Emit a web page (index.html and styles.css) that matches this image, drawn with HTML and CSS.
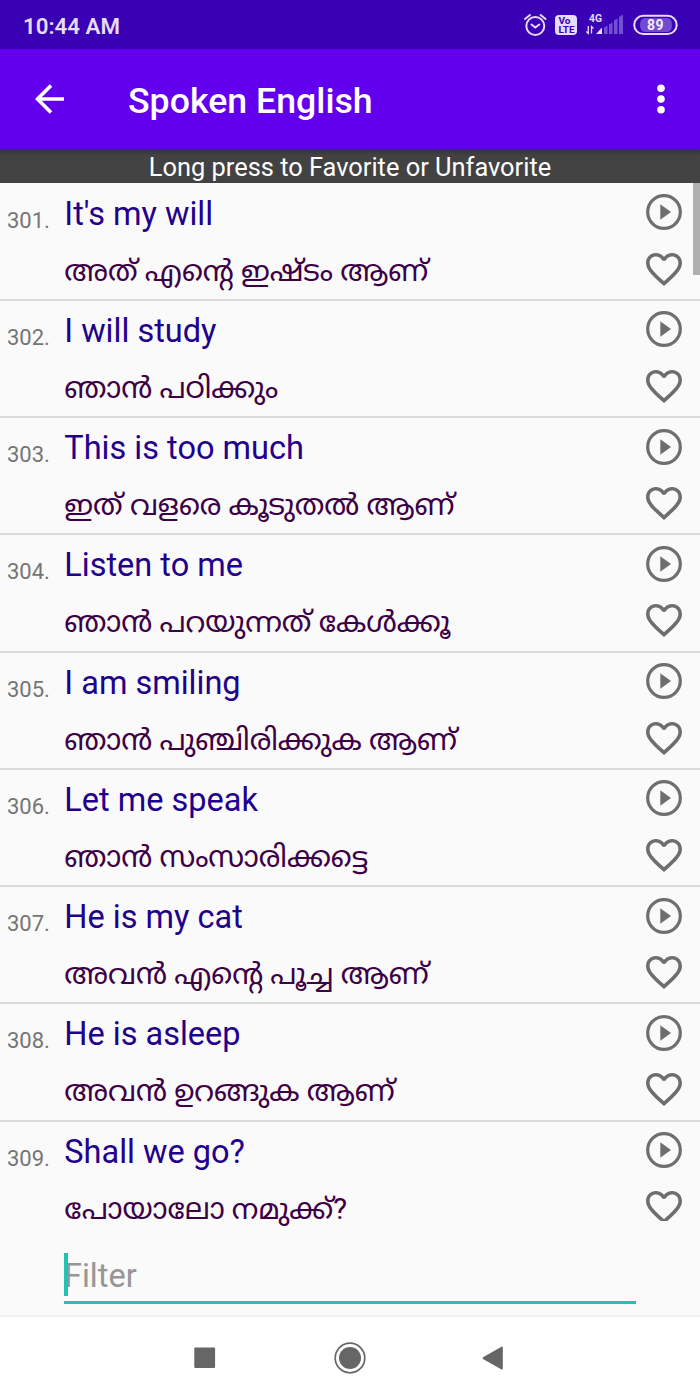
FILE: index.html
```html
<!DOCTYPE html>
<html lang="en">
	<head>
		<meta charset="utf-8">
		<title>Spoken English</title>
		<link rel="stylesheet" href="styles.css">
	</head>
	<body>
		<svg class="defs">
			<symbol id="play" viewBox="0 0 36 36">
				<circle cx="18" cy="18" r="16.3" fill="none" stroke="#6e6e6e" stroke-width="3.2"/>
				<path d="M14.3 10.3v15.4L25 18z" fill="#6e6e6e"/>
			</symbol>
			<symbol id="heart" viewBox="2 3 20 18.35">
				<path fill="#6e6e6e" d="M16.5 3c-1.74 0-3.41.81-4.5 2.09C10.91 3.81 9.24 3 7.5 3 4.42 3 2 5.42 2 8.5c0 3.78 3.4 6.86 8.55 11.54L12 21.35l1.45-1.32C18.6 15.36 22 12.28 22 8.5 22 5.42 19.58 3 16.5 3zm-4.4 15.55l-.1.1-.1-.1C7.14 14.24 4 11.39 4 8.5 4 6.5 5.5 5 7.5 5c1.54 0 3.04.99 3.57 2.36h1.87C13.46 5.99 14.96 5 16.5 5c2 0 3.5 1.5 3.5 3.5 0 2.89-3.14 5.74-7.9 10.05z"/>
			</symbol>
		</svg>
		<div id="status">
			<span class="time">10:44 AM</span>
			<svg class="icons" width="160" height="30" viewBox="520 10 160 30">
				<g fill="none" stroke="#e6dcfa" stroke-width="2" stroke-linecap="round">
					<circle cx="535.3" cy="26" r="9"/>
					<path d="M531.5 24.5l3.800 3 4-3"/>
					<path d="M525 19l5-4M545.600 19l-5-4"/>
				</g>
				<rect x="555" y="15" width="22" height="20" rx="4" fill="#e6dcfa"/>
				<text x="558.500" y="24" class="volte" textLength="12" lengthAdjust="spacingAndGlyphs">Vo</text>
				<text x="558.500" y="32.500" class="volte" textLength="16" lengthAdjust="spacingAndGlyphs">LTE</text>
				<text x="589" y="22" class="net" textLength="13" lengthAdjust="spacingAndGlyphs">4G</text>
				<path d="M588.300 26v7.500l-2-2M591.500 33.500V26.500l2 2" fill="none" stroke="#e6dcfa" stroke-width="1.300"/>
				<path d="M602 27.500V34h-6z" fill="#e6dcfa"/>
				<path d="M604 27.500l3.500-2V34H604zM609 24.500l3.500-2V34H609zM614 20.500l3.500-2V34H614zM619 17l4-2.500V34h-4z" fill="#7350d2"/>
				<rect x="634.200" y="15.800" width="42.500" height="18.200" rx="9.100" fill="none" stroke="#e6dcfa" stroke-width="2"/>
				<path d="M645 18h22q5 0 5 7t-5 7h-22q-5 0-5-7t5-7z" fill="#704bd2"/>
				<text x="647" y="30" class="batt" textLength="16.500">89</text>
			</svg>
		</div>
		<div id="bar">
			<svg class="back" width="30" height="30" viewBox="0 0 30 30">
				<path d="M29 15H3M16 1.500L2.500 15 16 28.500" fill="none" stroke="#fff" stroke-width="3.600"/>
			</svg>
			<h1>Spoken English</h1>
			<svg class="more" width="8" height="30" viewBox="0 0 8 30" fill="#fff">
				<circle cx="4" cy="4.200" r="3.800"/>
				<circle cx="4" cy="15" r="3.800"/>
				<circle cx="4" cy="25.800" r="3.800"/>
			</svg>
		</div>
		<div id="hint">Long press to Favorite or Unfavorite</div>
		<div id="list">
			<ul>
				<li><span class="num">301.</span><div class="txt"><p class="en">It's my will</p><p class="ml" lang="ml">അത് എന്റെ ഇഷ്ടം ആണ്</p></div><div class="act"><svg class="play"><use href="#play"/></svg><svg class="heart"><use href="#heart"/></svg></div></li>
				<li><span class="num">302.</span><div class="txt"><p class="en">I will study</p><p class="ml" lang="ml">ഞാൻ പഠിക്കും</p></div><div class="act"><svg class="play"><use href="#play"/></svg><svg class="heart"><use href="#heart"/></svg></div></li>
				<li><span class="num">303.</span><div class="txt"><p class="en">This is too much</p><p class="ml" lang="ml">ഇത് വളരെ കൂടുതൽ ആണ്</p></div><div class="act"><svg class="play"><use href="#play"/></svg><svg class="heart"><use href="#heart"/></svg></div></li>
				<li><span class="num">304.</span><div class="txt"><p class="en">Listen to me</p><p class="ml" lang="ml">ഞാൻ പറയുന്നത് കേൾക്കൂ</p></div><div class="act"><svg class="play"><use href="#play"/></svg><svg class="heart"><use href="#heart"/></svg></div></li>
				<li><span class="num">305.</span><div class="txt"><p class="en">I am smiling</p><p class="ml" lang="ml">ഞാൻ പുഞ്ചിരിക്കുക ആണ്</p></div><div class="act"><svg class="play"><use href="#play"/></svg><svg class="heart"><use href="#heart"/></svg></div></li>
				<li><span class="num">306.</span><div class="txt"><p class="en">Let me speak</p><p class="ml" lang="ml">ഞാൻ സംസാരിക്കട്ടെ</p></div><div class="act"><svg class="play"><use href="#play"/></svg><svg class="heart"><use href="#heart"/></svg></div></li>
				<li><span class="num">307.</span><div class="txt"><p class="en">He is my cat</p><p class="ml" lang="ml">അവൻ എന്റെ പൂച്ച ആണ്</p></div><div class="act"><svg class="play"><use href="#play"/></svg><svg class="heart"><use href="#heart"/></svg></div></li>
				<li><span class="num">308.</span><div class="txt"><p class="en">He is asleep</p><p class="ml" lang="ml">അവൻ ഉറങ്ങുക ആണ്</p></div><div class="act"><svg class="play"><use href="#play"/></svg><svg class="heart"><use href="#heart"/></svg></div></li>
				<li class="last"><span class="num">309.</span><div class="txt"><p class="en">Shall we go?</p><p class="ml" lang="ml">പോയാലോ നമുക്ക്?</p></div><div class="act"><svg class="play"><use href="#play"/></svg><svg class="heart"><use href="#heart"/></svg></div></li>
			</ul>
			<div class="scroll"></div>
		</div>
		<div id="filter">
			<div class="field"><span>Filter</span><i class="caret"></i></div>
		</div>
		<div id="nav">
			<svg width="320" height="40" viewBox="190 1338 320 40" fill="#666">
				<rect x="194.300" y="1347.500" width="20.800" height="20.500" rx="1"/>
				<circle cx="350" cy="1358" r="11"/>
				<circle cx="350" cy="1358" r="14.800" fill="none" stroke="#666" stroke-width="1.700"/>
				<path d="M483 1357.300l18.500-10.500q1.300-.6 1.300.8v21q0 1.400-1.300.8L483 1359q-.9-.8 0-1.700z"/>
			</svg>
		</div>
	</body>
</html>
```
FILE: styles.css
```css
*{
	margin: 0;
	padding: 0;
	box-sizing: border-box;
}
body{
	width: 700px;
	height: 1400px;
	overflow: hidden;
	background: #fafafa;
	font-family: Roboto, "Noto Sans Malayalam", "Noto Sans", sans-serif;
}
li{
	list-style: none;
}
svg{
	display: block;
}
.defs{
	display: none;
}
#status{
	height: 49px;
	background: #3a00b3;
	display: flex;
	justify-content: space-between;
	padding: 10px 20px 0 23px;
}
.time{
	font-size: 22.3px;
	font-weight: 600;
	line-height: 32px;
	color: #e6dcfa;
}
.volte{
	font-size: 9.5px;
	font-weight: 700;
	fill: #3a00b3;
}
.net{
	font-size: 10.5px;
	font-weight: 700;
	fill: #e6dcfa;
}
.batt{
	font-size: 14px;
	font-weight: 700;
	fill: #f4eeff;
}
#bar{
	height: 100px;
	background: #6200ee;
	display: flex;
	align-items: center;
	padding: 0 35.5px 0 35px;
}
#bar h1{
	flex: 1;
	margin: 3px 0 0 63px;
	font-size: 35.7px;
	font-weight: 500;
	color: #fff;
}
#hint{
	height: 34px;
	background: linear-gradient(#353535, #424242 7px);
	color: #fff;
	font-size: 25.4px;
	line-height: 37px;
	text-align: center;
}
#list{
	position: relative;
	height: 1038px;
}
#list ul{
	padding-top: .5px;
}
#list li{
	display: flex;
	height: 117.25px;
	border-bottom: 2px solid #dcdcdc;
}
#list li.last{
	height: 99.5px;
	border-bottom: 0;
}
.last .act{
	overflow: hidden;
}
.num{
	width: 64.3px;
	padding-left: 7px;
	font-size: 22px;
	line-height: 74px;
	letter-spacing: 0;
	color: #757575;
}
.txt{
	flex: 1;
	white-space: nowrap;
}
.en{
	height: 60px;
	font-size: 32.5px;
	line-height: 61.5px;
	color: #21008c;
}
.ml{
	font-size: 29.2px;
	line-height: 55px;
	color: #3c0046;
}
.act{
	width: 54px;
	padding-top: 10.5px;
}
.play{
	width: 36px;
	height: 36px;
}
.heart{
	width: 36px;
	height: 33px;
	margin-top: 22.5px;
}
.scroll{
	position: absolute;
	top: 0;
	right: 0;
	width: 7px;
	height: 92px;
	background: #b0b0b0;
}
#filter{
	height: 96px;
	padding: 32px 64px 0;
	border-bottom: 2px solid #f2f2f2;
}
.field{
	position: relative;
	height: 51px;
	border-bottom: 3px solid #1fc4b4;
	font-size: 32.5px;
	line-height: 47px;
	color: #969696;
}
.caret{
	position: absolute;
	left: 0;
	top: 0;
	width: 4px;
	height: 43px;
	background: #1fc4b4;
}
#nav{
	height: 83px;
	background: #fff;
	display: flex;
	justify-content: center;
	padding-top: 21px;
}
```
